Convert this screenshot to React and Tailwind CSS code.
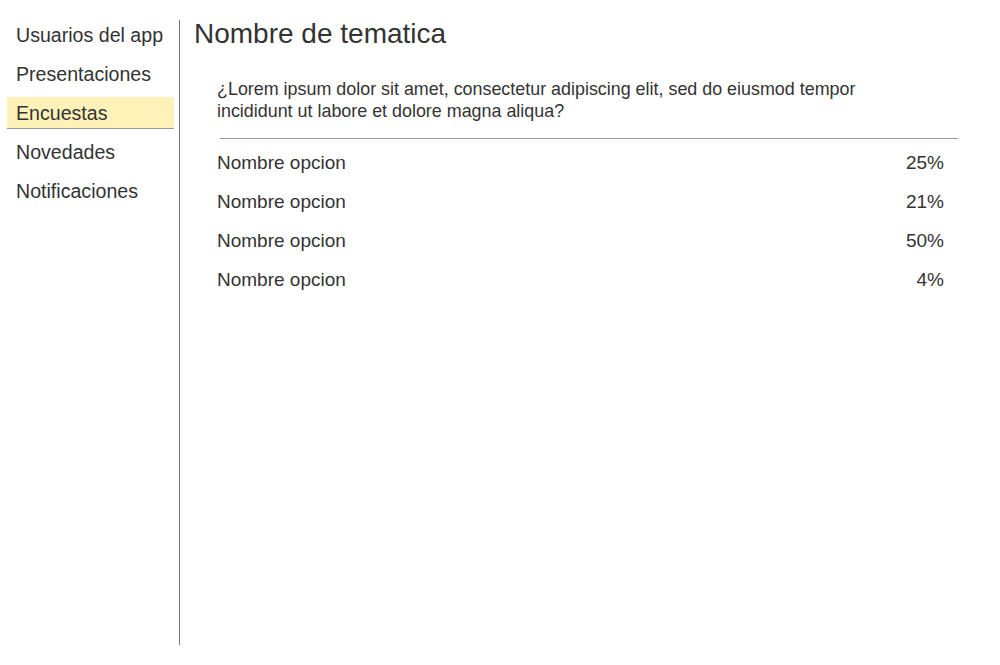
const menu = ['Usuarios del app', 'Presentaciones', 'Encuestas', 'Novedades', 'Notificaciones'];

const opciones = [
  { nombre: 'Nombre opcion', valor: '25%' },
  { nombre: 'Nombre opcion', valor: '21%' },
  { nombre: 'Nombre opcion', valor: '50%' },
  { nombre: 'Nombre opcion', valor: '4%' },
];

export default function App() {
  return (
    <div className="w-[1000px] h-[665px] bg-white flex pt-5 pb-5 text-[#333] font-['Liberation_Sans',Arial,sans-serif]">
      {/* Sidebar */}
      <nav className="w-[180px] shrink-0 pl-[7px] pr-[5px] border-r border-[#777]">
        <div className="-mt-px flex flex-col">
          {menu.map((item) => (
            <div
              key={item}
              className={`h-[32px] mb-[7px] pl-[9px] flex items-center text-[19.6px] leading-none ${
                item === 'Encuestas' ? 'bg-[#fff2b8] border-b border-[#999]' : ''
              }`}
            >
              <span className="mt-[2px]">{item}</span>
            </div>
          ))}
        </div>
      </nav>

      {/* Content */}
      <main className="flex-1 pl-[14px]">
        <h1 className="text-[28px] leading-[28px] font-normal">Nombre de tematica</h1>
        <div className="pl-[23px] pr-[42px]">
          <p className="mt-[30px] text-[17.9px] leading-[22px] w-[680px]">
            ¿Lorem ipsum dolor sit amet, consectetur adipiscing elit, sed do eiusmod tempor incididunt ut labore et dolore magna aliqua?
          </p>
          <div className="mt-[16px] ml-[3px] border-t border-[#999]" />
          <ul className="mt-[5px] pr-[14px]">
            {opciones.map((o, i) => (
              <li key={i} className="h-[39px] flex items-center justify-between text-[19px]">
                <span>{o.nombre}</span>
                <span>{o.valor}</span>
              </li>
            ))}
          </ul>
        </div>
      </main>
    </div>
  );
}
